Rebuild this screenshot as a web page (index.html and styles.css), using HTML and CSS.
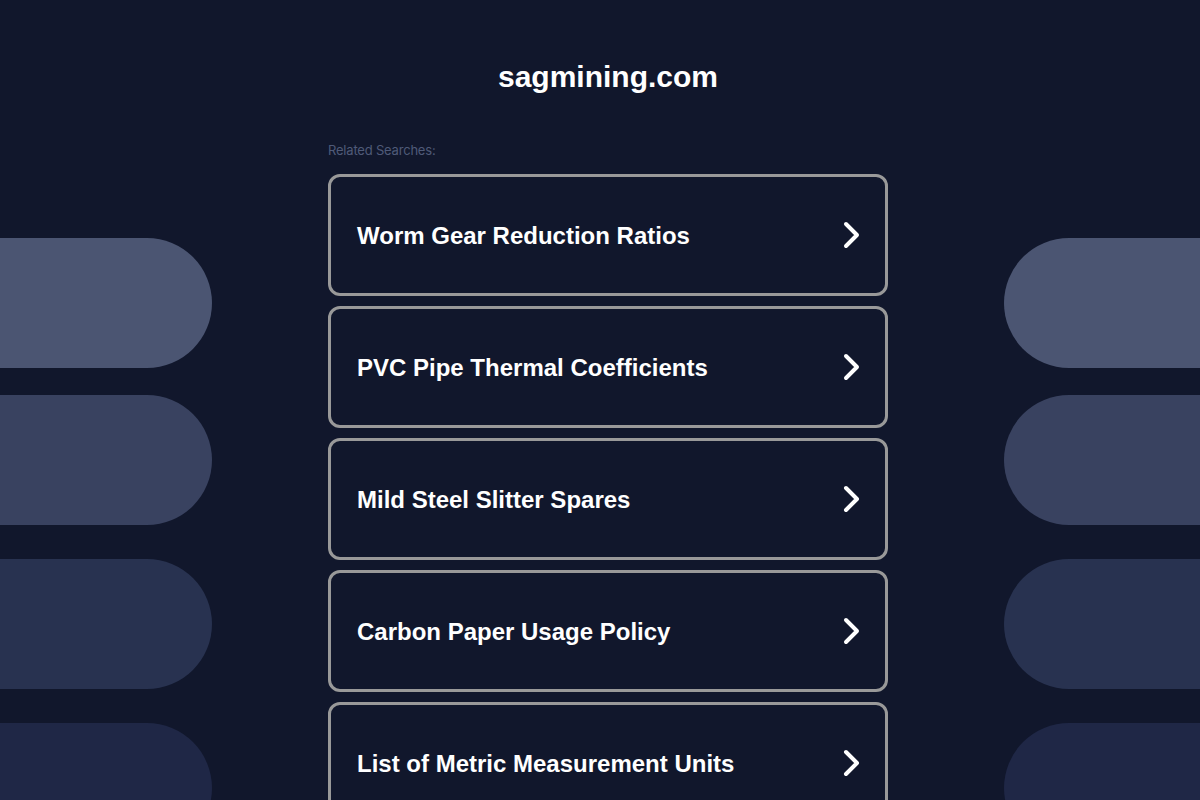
FILE: index.html
```html
<!DOCTYPE html>
<html>
<head>
<meta charset="utf-8">
<link rel="stylesheet" href="styles.css">
</head>
<body>
<div class="page">
  <div class="side side-left">
    <div class="pill pill-1"></div>
    <div class="pill pill-2"></div>
    <div class="pill pill-3"></div>
    <div class="pill pill-4"></div>
  </div>
  <main class="main">
    <h1 class="title">sagmining.com</h1>
    <div class="related">Related Searches:</div>
    <ul class="links">
      <li class="link"><span class="link-text">Worm Gear Reduction Ratios</span><svg class="chev" viewBox="0 0 20 30" width="20" height="30"><path d="M5 4 L16 15 L5 26" fill="none" stroke="#fff" stroke-width="4" stroke-linecap="round" stroke-linejoin="round"/></svg></li>
      <li class="link"><span class="link-text">PVC Pipe Thermal Coefficients</span><svg class="chev" viewBox="0 0 20 30" width="20" height="30"><path d="M5 4 L16 15 L5 26" fill="none" stroke="#fff" stroke-width="4" stroke-linecap="round" stroke-linejoin="round"/></svg></li>
      <li class="link"><span class="link-text">Mild Steel Slitter Spares</span><svg class="chev" viewBox="0 0 20 30" width="20" height="30"><path d="M5 4 L16 15 L5 26" fill="none" stroke="#fff" stroke-width="4" stroke-linecap="round" stroke-linejoin="round"/></svg></li>
      <li class="link"><span class="link-text">Carbon Paper Usage Policy</span><svg class="chev" viewBox="0 0 20 30" width="20" height="30"><path d="M5 4 L16 15 L5 26" fill="none" stroke="#fff" stroke-width="4" stroke-linecap="round" stroke-linejoin="round"/></svg></li>
      <li class="link"><span class="link-text">List of Metric Measurement Units</span><svg class="chev" viewBox="0 0 20 30" width="20" height="30"><path d="M5 4 L16 15 L5 26" fill="none" stroke="#fff" stroke-width="4" stroke-linecap="round" stroke-linejoin="round"/></svg></li>
    </ul>
  </main>
  <div class="side side-right">
    <div class="pill pill-1"></div>
    <div class="pill pill-2"></div>
    <div class="pill pill-3"></div>
    <div class="pill pill-4"></div>
  </div>
</div>
</body>
</html>
```

FILE: styles.css
```css
html, body {
  margin: 0;
  padding: 0;
  background: #11172c;
  height: 800px;
  overflow: hidden;
}
body {
  font-family: "Liberation Sans", Arial, sans-serif;
  color: #fff;
}
.page {
  display: grid;
  grid-template-columns: 212px 560px 196px;
  column-gap: 116px;
  height: 800px;
  overflow: hidden;
}
.side {
  padding-top: 238px;
  display: flex;
  flex-direction: column;
}
.pill {
  height: 130px;
  flex: none;
}
.pill-2 { margin-top: 27px; }
.pill-3, .pill-4 { margin-top: 34px; }
.side-left .pill { border-radius: 0 65px 65px 0; }
.side-right .pill { border-radius: 65px 0 0 65px; }
.pill-1 { background: #4b5572; }
.pill-2 { background: #394260; }
.pill-3 { background: #283250; }
.pill-4 { background: #1f2746; }
.main {
  display: flex;
  flex-direction: column;
  min-height: 0;
}
.title {
  margin: 59px 0 0;
  font-size: 30px;
  line-height: 36px;
  font-weight: bold;
  text-align: center;
}
.related {
  margin-top: 47px;
  font-family: Inter, "Open Sans", sans-serif;
  font-size: 13px;
  line-height: 16px;
  color: #4f5a78;
  letter-spacing: -0.2px;
}
.links {
  list-style: none;
  margin: 16px 0 0;
  padding: 0;
  display: flex;
  flex-direction: column;
  gap: 10px;
}
.link {
  height: 116px;
  flex: none;
  border: 3px solid #999;
  border-radius: 12px;
  display: flex;
  align-items: center;
  justify-content: space-between;
  padding: 0 24px 0 26px;
}
.link-text {
  font-size: 24px;
  font-weight: bold;
  position: relative;
  top: 1px;
}
.chev {
  display: block;
}
```
